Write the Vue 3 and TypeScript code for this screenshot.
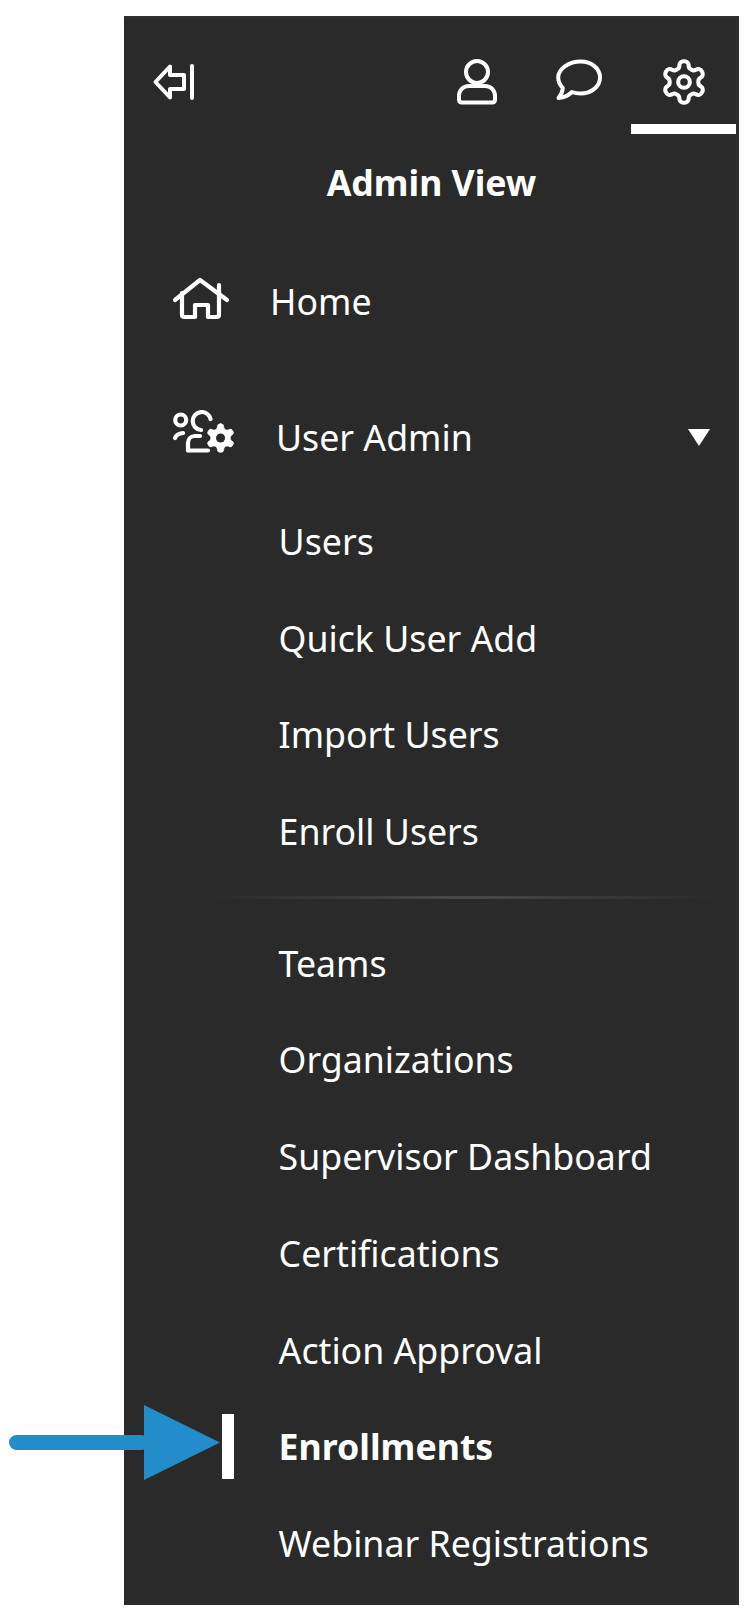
<script setup lang="ts">
const gear = "M12.22 2h-.44a2 2 0 0 0-2 2v.18a2 2 0 0 1-1 1.73l-.43.25a2 2 0 0 1-2 0l-.15-.08a2 2 0 0 0-2.73.73l-.22.38a2 2 0 0 0 .73 2.73l.15.1a2 2 0 0 1 1 1.72v.51a2 2 0 0 1-1 1.74l-.15.09a2 2 0 0 0-.73 2.73l.22.38a2 2 0 0 0 2.73.73l.15-.08a2 2 0 0 1 2 0l.43.25a2 2 0 0 1 1 1.73V20a2 2 0 0 0 2 2h.44a2 2 0 0 0 2-2v-.18a2 2 0 0 1 1-1.73l.43-.25a2 2 0 0 1 2 0l.15.08a2 2 0 0 0 2.73-.73l.22-.39a2 2 0 0 0-.73-2.73l-.15-.08a2 2 0 0 1-1-1.74v-.5a2 2 0 0 1 1-1.74l.15-.09a2 2 0 0 0 .73-2.73l-.22-.38a2 2 0 0 0-2.73-.73l-.15.08a2 2 0 0 1-2 0l-.43-.25a2 2 0 0 1-1-1.73V4a2 2 0 0 0-2-2z";
const groupA: string[] = ["Users", "Quick User Add", "Import Users", "Enroll Users"];
const groupB: { label: string; active?: boolean }[] = [
  { label: "Teams" },
  { label: "Organizations" },
  { label: "Supervisor Dashboard" },
  { label: "Certifications" },
  { label: "Action Approval" },
  { label: "Enrollments", active: true },
  { label: "Webinar Registrations" },
];
</script>

<template>
  <div class="page">
    <aside class="panel">
      <header class="top">
        <svg class="back" width="42" height="38" viewBox="0 0 42 38" fill="none" stroke="#fff" stroke-width="4" stroke-linecap="round" stroke-linejoin="round">
          <path d="M2.5 19 17 3.5 V12 H31 V26 H17 V34.5 Z" />
          <path d="M39 3 V35" />
        </svg>
        <div class="tabs">
          <div class="tab person">
            <svg width="42" height="46" viewBox="0 0 42 46" fill="none" stroke="#fff" stroke-width="4" stroke-linecap="round" stroke-linejoin="round">
              <circle cx="21" cy="13" r="11" />
              <path d="M13 27 H29 C35 27 39 31.5 39 37 V40.5 Q39 43.5 36 43.5 H6 Q3 43.5 3 40.5 V37 C3 31.5 7 27 13 27 Z" />
            </svg>
          </div>
          <div class="tab">
            <svg width="46" height="41" viewBox="0 0 46 41" fill="none" stroke="#fff" stroke-width="4" stroke-linecap="round" stroke-linejoin="round">
              <path d="M24.5 2.5 C35.5 2.5 44 9.5 44 18.5 C44 27.5 35.5 34.5 24.5 34.5 C21.5 34.5 18.5 34 16 33 C12.5 36.5 7 38.5 2.5 39 C5 36 6.6 33 6.8 29 C3.5 25.5 2.2 22 2.2 18.5 C2.2 9.5 13.5 2.5 24.5 2.5 Z" />
            </svg>
          </div>
          <div class="tab active">
            <svg width="50" height="50" viewBox="0 0 24 24" fill="none" stroke="#fff" stroke-width="1.95" stroke-linecap="round" stroke-linejoin="round">
              <path :d="gear" />
              <circle cx="12" cy="12" r="2.8" />
            </svg>
          </div>
        </div>
      </header>

      <h1 class="title">Admin View</h1>

      <div class="main-row home">
        <svg class="ico" width="58" height="46" viewBox="0 0 58 46" fill="none" stroke="#fff" stroke-width="4.2" stroke-linecap="round" stroke-linejoin="round">
          <path d="M3 24 28 4 55 24" />
          <path d="M47 9 V38.5 Q47 41 44.5 41 H36 V29 H23 V41 H12.5 Q10 41 10 38.5 V17" />
        </svg>
        <span>Home</span>
      </div>

      <div class="main-row admin">
        <svg class="ico" width="62" height="44" viewBox="0 0 62 44" fill="none" stroke="#fff" stroke-width="4.2" stroke-linecap="round" stroke-linejoin="round">
          <circle cx="8.7" cy="10" r="5.5" />
          <path d="M3 28 C4 25 7 23.5 11 23" />
          <path d="M38.5 9 A9 9 0 1 0 29 20" />
          <path d="M16 40.5 V33 C16 29 19 26 23 26 H28" />
          <path d="M16 40.5 H36" />
          <g transform="translate(31.5 11) scale(1.42)">
            <path :d="gear" fill="#2a2a2a" stroke="#2a2a2a" stroke-width="2" />
            <path :d="gear" fill="#fff" stroke="#fff" stroke-width="0.5" />
            <circle cx="12" cy="12" r="3.2" fill="#2a2a2a" stroke="none" />
          </g>
        </svg>
        <span>User Admin</span>
        <i class="caret"></i>
      </div>

      <nav class="sub first">
        <a v-for="item in groupA" :key="item" class="sub-item">{{ item }}</a>
      </nav>

      <div class="rule"></div>

      <nav class="sub">
        <a v-for="item in groupB" :key="item.label" class="sub-item" :class="{ current: item.active }">{{ item.label }}</a>
      </nav>
    </aside>

    <svg class="pointer" width="224" height="78" viewBox="0 0 224 78" fill="#238ccb">
      <rect x="9" y="31" width="140" height="15" rx="7.5" />
      <path d="M144 1 220 38.5 144 76 Z" />
    </svg>
  </div>
</template>

<style>
body { margin: 0; background: #fff; }
</style>

<style scoped>
.page {
  position: relative;
  width: 748px;
  height: 1611px;
  overflow: hidden;
  background: #fff;
  padding: 16px 0 0 124px;
  box-sizing: border-box;
  font-family: "Noto Sans", sans-serif;
}
.panel {
  width: 615px;
  height: 1589px;
  background: #2a2a2a;
  box-shadow: inset 0 3px 0 #2e2e2e, inset -3px 0 0 #2e2e2e;
  color: #fff;
  display: flex;
  flex-direction: column;
}
.top {
  display: flex;
  justify-content: space-between;
  align-items: flex-start;
  height: 118px;
  padding-left: 29px;
  padding-right: 3px;
}
.back { margin-top: 47px; }
.tabs { display: flex; }
.tab {
  width: 105px;
  height: 118px;
  box-sizing: border-box;
  padding-top: 43px;
  display: flex;
  justify-content: center;
  align-items: flex-start;
}
.tab.person { padding-left: 6px; }
.tab.active { border-bottom: 10px solid #fff; padding-top: 40.5px; }
.title {
  margin: 0;
  height: 62px;
  line-height: 60px;
  padding-top: 18px;
  text-align: center;
  font-size: 35.6px;
  font-weight: 700;
}
.main-row {
  display: flex;
  align-items: center;
  font-size: 35.7px;
  position: relative;
}
.main-row .ico { flex: none; }
.home { margin-top: 62px; height: 50px; padding-left: 48px; }
.home .ico { margin-bottom: 5px; }
.home span { margin-left: 40px; }
.admin { margin-top: 86px; height: 50px; padding-left: 48px; }
.admin .ico { margin-bottom: 10px; }
.admin span { margin-left: 42px; }
.caret {
  position: absolute;
  left: 564px;
  top: 17px;
  width: 0;
  height: 0;
  border-left: 11px solid transparent;
  border-right: 11px solid transparent;
  border-top: 17px solid #fff;
}
.sub { display: flex; flex-direction: column; }
.first { margin-top: 31px; }
.sub-item {
  height: 96.7px;
  line-height: 96.7px;
  padding-left: 154.6px;
  font-size: 35.7px;
  position: relative;
  white-space: nowrap;
}
.sub-item.current { font-weight: 700; }
.sub-item.current::before {
  content: "";
  position: absolute;
  left: 98px;
  top: 16px;
  width: 12px;
  height: 65px;
  background: #fff;
}
.rule {
  height: 3px;
  margin: 16px 14px 16px 80px;
  background: linear-gradient(90deg, rgba(255,255,255,0), rgba(255,255,255,0.14) 50%, rgba(255,255,255,0));
}
.pointer {
  position: absolute;
  left: 0;
  top: 1404px;
}
</style>
